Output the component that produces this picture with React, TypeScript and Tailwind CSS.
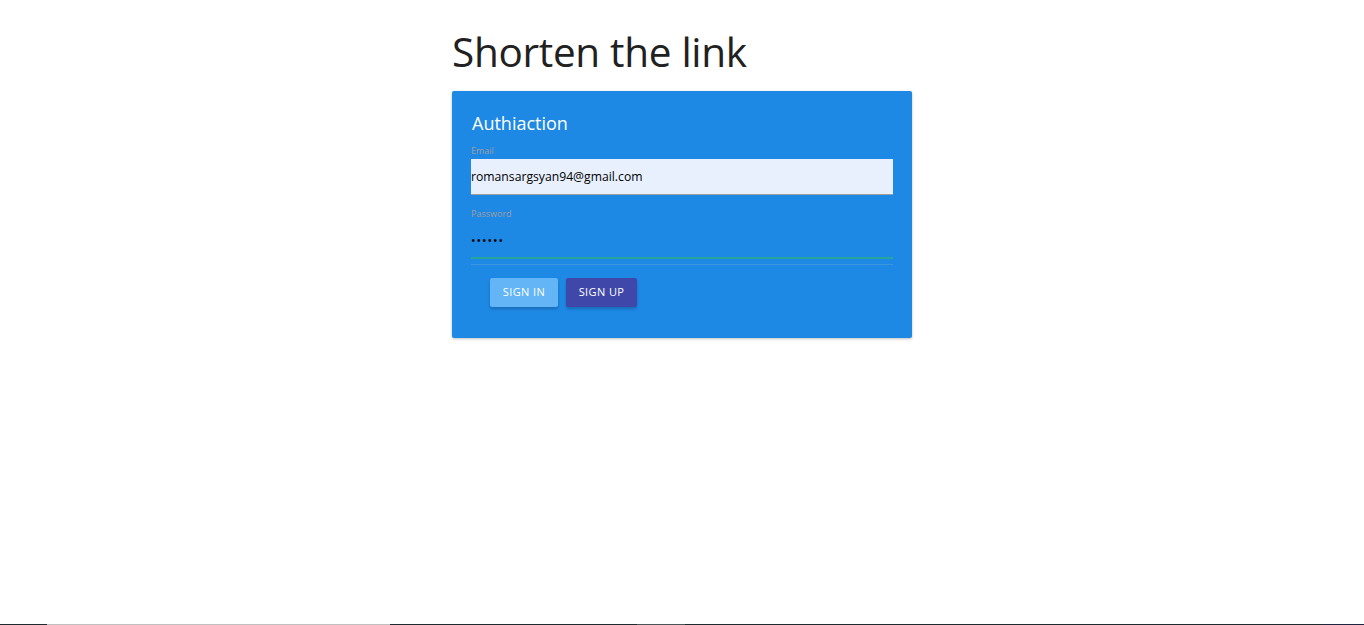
import React, { useState } from 'react';

const font = { fontFamily: '"Open Sans", "Noto Sans", sans-serif' };

export default function App() {
    const [email, setEmail] = useState('romansargsyan94@gmail.com');
    const [password, setPassword] = useState('123456');

    return (
        <div className="relative min-h-[625px] bg-white" style={font}>
            <div className="mx-auto w-[460px] pt-[22px]">
                <h1 className="text-[40.5px] leading-[60px] font-normal text-[#212121] tracking-[-0.3px]">Shorten the link</h1>

                <div className="mt-[9px] h-[247px] rounded-[2px] bg-[#1e88e5] shadow-[0_1px_3px_rgba(0,0,0,0.25)]">
                    <div className="px-[19px] pt-[20px]">
                        <div className="pl-[1px] text-[18px] leading-[24px] font-normal text-white">Authiaction</div>

                        <div className="mt-[10px]">
                            <label htmlFor="email" className="block text-[9px] leading-[12px] text-[#9e9e9e]">Email</label>
                            <input
                                id="email"
                                type="text"
                                value={email}
                                onChange={(e) => setEmail(e.target.value)}
                                className="mt-[2px] block h-[36px] w-full border-b border-[#9e9e9e] bg-[#e8f0fe] text-[12.2px] text-black outline-none"
                            />
                        </div>

                        <div className="mt-[13px]">
                            <label htmlFor="password" className="block text-[9px] leading-[12px] text-[#9e9e9e]">Password</label>
                            <input
                                id="password"
                                type="password"
                                value={password}
                                onChange={(e) => setPassword(e.target.value)}
                                className="mt-[2px] block h-[37px] w-full border-b-2 border-[#26a69a] bg-transparent pt-[2px] text-[12px] tracking-[1px] text-black outline-none"
                            />
                        </div>
                    </div>

                    <div className="mx-[19px] mt-[5px] border-t border-[#3d95e0] pt-[13px] pl-[19px] flex gap-[8px]">
                        <button className="h-[29px] w-[68px] rounded-[2px] bg-[#64b5f6] text-[11px] tracking-[0.4px] text-white shadow-[0_2px_3px_rgba(0,0,0,0.2)]">SIGN IN</button>
                        <button className="h-[29px] w-[71px] rounded-[2px] bg-[#3f48a8] text-[11px] tracking-[0.4px] text-white shadow-[0_2px_3px_rgba(0,0,0,0.2)]">SIGN UP</button>
                    </div>
                </div>
            </div>

            {/* bottom strip */}
            <div className="absolute bottom-0 left-0 flex h-[1px] w-full">
                <div className="w-[47px] bg-[#1e2b2e]" />
                <div className="w-[343px] bg-[#c0c0c0]" />
                <div className="w-[247px] bg-[#1e2b2e]" />
                <div className="w-[48px] bg-[#4a5558]" />
                <div className="flex-1 bg-[#1e2b2e]" />
                <div className="w-[40px] bg-[#1e2540]" />
            </div>
        </div>
    );
}
